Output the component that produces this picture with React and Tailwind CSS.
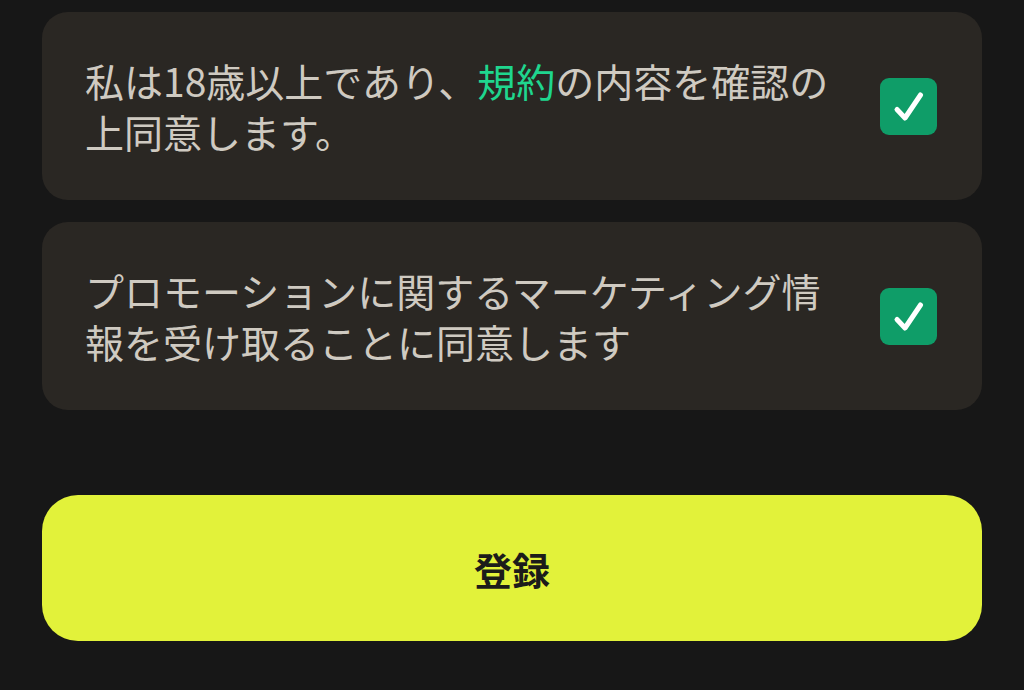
const Check = () => (
  <div className="w-[57px] h-[57px] shrink-0 rounded-[9px] bg-[#0f9d68] flex items-center justify-center">
    <svg width="57" height="57" viewBox="0 0 57 57" fill="none">
      <path d="M17 31.5l8 8.5L40.5 17" stroke="white" strokeWidth="5" strokeLinecap="round" strokeLinejoin="round" />
    </svg>
  </div>
);

const Row = ({ children }) => (
  <div className="h-[188px] rounded-[26px] bg-[#2a2723] pl-[43px] pr-[45px] flex items-center gap-[35px]">
    <p className="flex-1 text-[39px] leading-[51px] text-[#cfcac1]">{children}</p>
    <Check />
  </div>
);

const App = () => {
  return (
    <div
      className="w-[1024px] h-[690px] bg-[#171717] px-[42px] pt-[12px] flex flex-col overflow-hidden"
      style={{ fontFamily: '"Noto Sans CJK JP", "Noto Sans", sans-serif' }}
    >
      <div className="flex flex-col gap-[22px]">
        <Row>
          私は18歳以上であり、<span className="text-[#1fd68e]">規約</span>の内容を確認の上同意します。
        </Row>
        <Row>プロモーションに関するマーケティング情報を受け取ることに同意します</Row>
      </div>
      <button className="mt-[85px] h-[146px] w-full rounded-[36px] bg-[#e2f23a] text-[#1c1c1a] text-[38px] font-bold">
        登録
      </button>
    </div>
  );
};

export default App;
